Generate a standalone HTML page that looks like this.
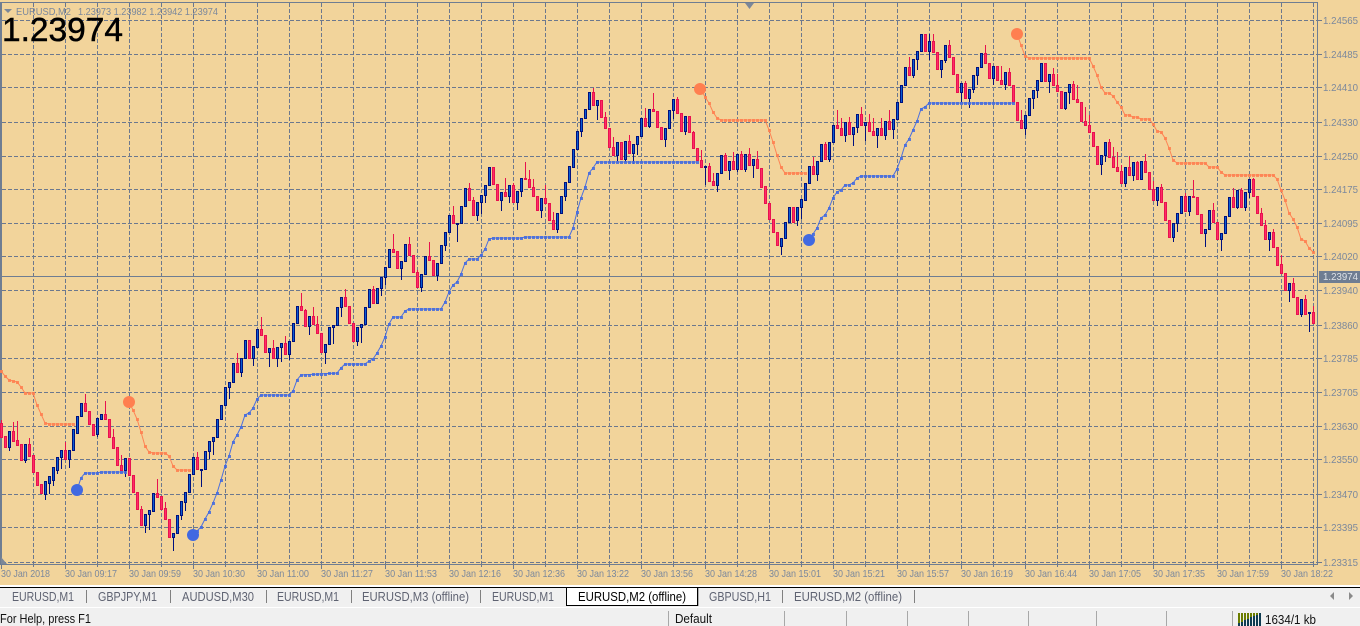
<!DOCTYPE html>
<html lang="en"><head><meta charset="utf-8"><title>EURUSD,M2</title>
<style>
html,body{margin:0;padding:0;width:1360px;height:626px;overflow:hidden;background:#f0f0f0}
svg{display:block;position:absolute;left:0;top:0}
text{font-family:"Liberation Sans",sans-serif;white-space:pre}
.t{font-size:10.5px;fill:#7b889c}
.tab{font-size:12.5px;fill:#5f6372}
.st{font-size:12.5px;fill:#111}
</style></head><body>
<svg xmlns="http://www.w3.org/2000/svg" width="1360" height="626" viewBox="0 0 1360 626">
<rect x="0" y="0" width="1360" height="585" fill="#f2d49b"/>
<g id="grid" shape-rendering="crispEdges" stroke="#6c788e" stroke-width="1" fill="none"></g>
<g shape-rendering="crispEdges">
<rect x="0" y="2" width="1318" height="1" fill="#6f7d92"/>
<rect x="0" y="2" width="2" height="563" fill="#6f7d92"/>
<rect x="1317" y="2" width="1" height="563" fill="#6f7d92"/>
<rect x="0" y="564" width="1318" height="1" fill="#6f7d92"/>
<rect x="0" y="276" width="1318" height="1" fill="#6f7d92"/>
</g>
<polygon points="745,3 754,3 749.5,9" fill="#7c8798"/>
<polygon points="4,9 12,9 8,13" fill="#7c8798"/>
<polygon points="1,557 7,564 1,564" fill="#7c8798"/>
<g id="candles" shape-rendering="crispEdges"></g>
<g id="ind"></g>
<text x="16" y="15" class="t" textLength="55" lengthAdjust="spacingAndGlyphs">EURUSD,M2</text>
<text x="78" y="15" class="t" textLength="140" lengthAdjust="spacingAndGlyphs">1.23973 1.23982 1.23942 1.23974</text>
<text x="2" y="41" font-size="33" fill="#000" stroke="#000" stroke-width=".5" textLength="121" lengthAdjust="spacingAndGlyphs">1.23974</text>

<g class="axis">
<text class="t" x="1323" y="24" textLength="35" lengthAdjust="spacingAndGlyphs">1.24565</text>
<text class="t" x="1323" y="58" textLength="35" lengthAdjust="spacingAndGlyphs">1.24485</text>
<text class="t" x="1323" y="91" textLength="35" lengthAdjust="spacingAndGlyphs">1.24410</text>
<text class="t" x="1323" y="126" textLength="35" lengthAdjust="spacingAndGlyphs">1.24330</text>
<text class="t" x="1323" y="160" textLength="35" lengthAdjust="spacingAndGlyphs">1.24250</text>
<text class="t" x="1323" y="193" textLength="35" lengthAdjust="spacingAndGlyphs">1.24175</text>
<text class="t" x="1323" y="227" textLength="35" lengthAdjust="spacingAndGlyphs">1.24095</text>
<text class="t" x="1323" y="260" textLength="35" lengthAdjust="spacingAndGlyphs">1.24020</text>
<text class="t" x="1323" y="294" textLength="35" lengthAdjust="spacingAndGlyphs">1.23940</text>
<text class="t" x="1323" y="329" textLength="35" lengthAdjust="spacingAndGlyphs">1.23860</text>
<text class="t" x="1323" y="362" textLength="35" lengthAdjust="spacingAndGlyphs">1.23785</text>
<text class="t" x="1323" y="396" textLength="35" lengthAdjust="spacingAndGlyphs">1.23705</text>
<text class="t" x="1323" y="430" textLength="35" lengthAdjust="spacingAndGlyphs">1.23630</text>
<text class="t" x="1323" y="463" textLength="35" lengthAdjust="spacingAndGlyphs">1.23550</text>
<text class="t" x="1323" y="498" textLength="35" lengthAdjust="spacingAndGlyphs">1.23470</text>
<text class="t" x="1323" y="531" textLength="35" lengthAdjust="spacingAndGlyphs">1.23395</text>
<text class="t" x="1323" y="566" textLength="35" lengthAdjust="spacingAndGlyphs">1.23315</text>
<rect x="1319" y="271" width="41" height="12" fill="#6f7d92"/>
<text x="1323" y="280" font-size="10.5" fill="#dfe3e8" textLength="35" lengthAdjust="spacingAndGlyphs">1.23974</text>
</g>

<g>
<text class="t" x="1" y="577" textLength="49" lengthAdjust="spacingAndGlyphs">30 Jan 2018</text>
<text class="t" x="65" y="577" textLength="52" lengthAdjust="spacingAndGlyphs">30 Jan 09:17</text>
<text class="t" x="129" y="577" textLength="52" lengthAdjust="spacingAndGlyphs">30 Jan 09:59</text>
<text class="t" x="193" y="577" textLength="52" lengthAdjust="spacingAndGlyphs">30 Jan 10:30</text>
<text class="t" x="257" y="577" textLength="52" lengthAdjust="spacingAndGlyphs">30 Jan 11:00</text>
<text class="t" x="321" y="577" textLength="52" lengthAdjust="spacingAndGlyphs">30 Jan 11:27</text>
<text class="t" x="385" y="577" textLength="52" lengthAdjust="spacingAndGlyphs">30 Jan 11:53</text>
<text class="t" x="449" y="577" textLength="52" lengthAdjust="spacingAndGlyphs">30 Jan 12:16</text>
<text class="t" x="513" y="577" textLength="52" lengthAdjust="spacingAndGlyphs">30 Jan 12:36</text>
<text class="t" x="577" y="577" textLength="52" lengthAdjust="spacingAndGlyphs">30 Jan 13:22</text>
<text class="t" x="641" y="577" textLength="52" lengthAdjust="spacingAndGlyphs">30 Jan 13:56</text>
<text class="t" x="705" y="577" textLength="52" lengthAdjust="spacingAndGlyphs">30 Jan 14:28</text>
<text class="t" x="769" y="577" textLength="52" lengthAdjust="spacingAndGlyphs">30 Jan 15:01</text>
<text class="t" x="833" y="577" textLength="52" lengthAdjust="spacingAndGlyphs">30 Jan 15:21</text>
<text class="t" x="897" y="577" textLength="52" lengthAdjust="spacingAndGlyphs">30 Jan 15:57</text>
<text class="t" x="961" y="577" textLength="52" lengthAdjust="spacingAndGlyphs">30 Jan 16:19</text>
<text class="t" x="1025" y="577" textLength="52" lengthAdjust="spacingAndGlyphs">30 Jan 16:44</text>
<text class="t" x="1089" y="577" textLength="52" lengthAdjust="spacingAndGlyphs">30 Jan 17:05</text>
<text class="t" x="1153" y="577" textLength="52" lengthAdjust="spacingAndGlyphs">30 Jan 17:35</text>
<text class="t" x="1217" y="577" textLength="52" lengthAdjust="spacingAndGlyphs">30 Jan 17:59</text>
<text class="t" x="1281" y="577" textLength="52" lengthAdjust="spacingAndGlyphs">30 Jan 18:22</text>
</g>

<g shape-rendering="crispEdges">
<rect x="0" y="585" width="1360" height="2" fill="#fff"/>
<rect x="0" y="587" width="1360" height="1" fill="#000"/>
<rect x="0" y="588" width="1360" height="19" fill="#f0f0f0"/>
<rect x="0" y="607" width="1360" height="1" fill="#fff"/>
<rect x="0" y="608" width="1360" height="18" fill="#f0f0f0"/>
<g fill="#808080">
<rect x="86" y="590" width="1" height="13"/><rect x="170" y="590" width="1" height="13"/>
<rect x="266" y="590" width="1" height="13"/><rect x="351" y="590" width="1" height="13"/>
<rect x="480" y="590" width="1" height="13"/><rect x="782" y="590" width="1" height="13"/>
<rect x="914" y="590" width="1" height="13"/>
</g>
<rect x="566" y="587" width="132" height="19" fill="#000"/>
<rect x="567" y="588" width="130" height="17" fill="#fff"/>
<rect x="698" y="588" width="1" height="18" fill="#b0b0b0"/>
<g fill="#a8a8a8">
<rect x="668" y="611" width="1" height="15"/><rect x="784" y="611" width="1" height="15"/>
<rect x="846" y="611" width="1" height="15"/><rect x="907" y="611" width="1" height="15"/>
<rect x="968" y="611" width="1" height="15"/><rect x="1028" y="611" width="1" height="15"/>
<rect x="1096" y="611" width="1" height="15"/><rect x="1166" y="611" width="1" height="15"/>
<rect x="1232" y="611" width="1" height="15"/>
</g>
</g>
<polygon points="1334,592 1334,600 1330,596" fill="#8a8a8a"/>
<polygon points="1349,592 1349,600 1353,596" fill="#8a8a8a"/>

<text class="tab" x="12" y="601" textLength="62" lengthAdjust="spacingAndGlyphs">EURUSD,M1</text>
<text class="tab" x="98" y="601" textLength="59" lengthAdjust="spacingAndGlyphs">GBPJPY,M1</text>
<text class="tab" x="182" y="601" textLength="72" lengthAdjust="spacingAndGlyphs">AUDUSD,M30</text>
<text class="tab" x="277" y="601" textLength="62" lengthAdjust="spacingAndGlyphs">EURUSD,M1</text>
<text class="tab" x="362" y="601" textLength="107" lengthAdjust="spacingAndGlyphs">EURUSD,M3 (offline)</text>
<text class="tab" x="492" y="601" textLength="62" lengthAdjust="spacingAndGlyphs">EURUSD,M1</text>
<text class="tab" style="fill:#000" x="578" y="601" textLength="108" lengthAdjust="spacingAndGlyphs">EURUSD,M2 (offline)</text>
<text class="tab" x="709" y="601" textLength="62" lengthAdjust="spacingAndGlyphs">GBPUSD,H1</text>
<text class="tab" x="794" y="601" textLength="108" lengthAdjust="spacingAndGlyphs">EURUSD,M2 (offline)</text>

<text class="st" x="0" y="623" textLength="91" lengthAdjust="spacingAndGlyphs">For Help, press F1</text>
<text class="st" x="675" y="623" textLength="37" lengthAdjust="spacingAndGlyphs">Default</text>
<text class="st" x="1265" y="624" textLength="51" lengthAdjust="spacingAndGlyphs">1634/1 kb</text>
<g id="meter" shape-rendering="crispEdges"></g>
</svg>
<script>
(function(){
var NS="http://www.w3.org/2000/svg";
function el(p,n,a){var e=document.createElementNS(NS,n);for(var k in a)e.setAttribute(k,a[k]);p.appendChild(e);return e;}
var g=document.getElementById("grid");
var ys=[20,54,87,122,156,189,223,256,290,325,358,392,426,459,494,527,562],i,x;
for(i=0;i<ys.length;i++)el(g,"line",{x1:2,x2:1317,y1:ys[i]+.5,y2:ys[i]+.5,"stroke-dasharray":"4 2"});
for(x=33;x<=1313;x+=32)el(g,"line",{x1:x+.5,x2:x+.5,y1:3,y2:564,"stroke-dasharray":"4 2"});
for(x=1;x<=1313;x+=32)el(g,"line",{x1:x+.5,x2:x+.5,y1:565,y2:((x-1)%64==0)?569:567,"stroke-dasharray":"none"});
for(i=0;i<ys.length;i++)el(g,"line",{x1:1318,x2:1322,y1:ys[i]+.5,y2:ys[i]+.5});

var D="1p423,437,420 5p436,447 9b431,447,,450 13p431,441,422 17p440,445,421 21p444,460 25b444,460,,462 29p444,456,438 33p455,472 37p472,485 41p484,493 45b481,494,,499 49b476,483,,493 53b467,480,,485 57b457,470,,473 61b450,457,,468 65p450,459,442 69b450,459,,467 73b429,450 77b416,433 81b403,416 85p403,411,394 89p411,424 93p424,435 97b418,434,,436 101b414,419 105p414,419,401 109p419,437 113p437,448,429 117p447,465 121p465,470,455 125b458,470,,476 129p458,475 133p475,492 137p492,509 141p509,525,506 145b514,525,,532 149b510,514,,529 153b493,511 157p493,497,479 161p496,509 165p508,519,502 169p519,537 173b533,537,,550 177b515,533 181b501,515,,519 185b492,502,,510 189b474,492 193b457,474 197p457,469,452 201b469,470,,486 205b451,469 209b441,451,,458 213b437,441,,454 217b419,437 221b405,419 225b387,405 229b382,387,,398 "+
"233b363,382 237p363,372,353 241b358,372,,376 245b340,358 249p340,358 253b346,358,,365 257b329,347 261p329,335,317 265p335,352 269b348,352,,366 273p348,358,340 277b347,358,,366 281b343,347,,361 285p343,354,336 289b341,354,,359 293b323,341 297b306,323 301p306,310,293 305p310,326,309 309b316,326,,334 313p316,324,307 317p324,333,316 321p333,352 325b344,352,,363 329b327,344 333b325,327,,343 337b307,325 341b297,307,,316 345p297,306,289 349p306,323 353p323,341 357b327,341,,345 361b324,327,,342 365b307,324 369b289,307 373p289,303,286 377b288,303 381b277,288,,295 385b267,277,,284 389b249,267 393p249,252,234 397p251,268 401b261,268,,279 405b244,261 409p244,255,237 413p255,272 417p272,287,270 421b274,287,,291 425b256,274 429p256,260,242 433p260,275 437b263,275,,280 441b245,263 445b232,245,,250 449b215,232 453p215,223,206 457b223,224,,241 461b206,223 465b188,206 469p188,200,183 473p200,215,197 477b202,215,,220 481b195,202,,213 485b185,195,,202 489b167,185 493p167,184 497p184,200 501b192,200,,210 505p192,196,178 509b185,196,,202 513p185,202,183 517b191,202,,209 521b178,191,,196 525p178,179,162 529p179,187,170 533p187,196,179 537p196,210 541b198,210,,217 545p198,203,185 549p203,220 553p220,229,212 557b213,229,,232 561b196,213 565b182,196,,200 569b166,182 "+
"573b149,167 577b131,149 581b118,131,,136 585b109,118 589b92,109 593p92,105,88 597b100,105,,119 601p100,117 605p117,128,112 609p128,147 613p147,155,137 617b142,155,,160 621p142,159 625b141,159,,161 629p141,153,135 633b144,153,,163 637b136,144,,154 641b118,136 645p118,126,108 649b109,126,,127 653p109,111,93 657p111,127 661p127,139 665b128,139,,146 669b110,128 673b99,110,,118 677p99,113,97 681p113,131 685b116,131,,134 689p116,132 693p132,148,131 697p148,160 701p160,167,150 705b166,167,,184 709p166,181,163 713p181,185,173 717b173,185,,191 721b155,173 725p155,170,153 729b161,170,,179 733p161,169,152 737b154,169,,171 741p154,169,151 745b154,169,,171 749p154,165,148 753b159,165,,177 757p159,168,151 761p168,187 765p186,203 769p203,219 773p219,232 777p232,245 781b238,246,,254 785b222,238 789b207,222 793p207,222 "+
"797b207,220,,225 801b199,207,,218 805b183,200 809b166,183 813p166,174,157 817b161,174,,180 821b144,161 825p144,159,142 829b142,159,,161 833b125,142 837p125,128,110 841p128,135,118 845b122,135,,141 849p122,134,117 853b127,134,,145 857b114,127,,132 861p114,125,107 865b122,125,,140 869p122,131,114 873p131,135,118 877b128,135,,147 881p128,135,118 885b121,135,,139 889p121,129,110 893b119,129,,138 897b102,119 901b85,102 905b67,85 909p67,75,57 913b59,75,,77 917b51,59,,69 921b34,51 925p34,51 929b41,51,34,59 933p41,52,34 937p52,69 941b60,69,,77 945b45,60,,62 949p45,57,40 953p57,74 957p74,92 961b83,92,,101 965p83,98,81 969b89,98,,107 973b75,89,,92 977b67,75,,84 981b53,67 985p53,63,45 989p63,78 993b66,78,,84 997p66,80 1001p80,84,66 1005b72,84,,89 1009p72,85,68 1013p85,102 1017p102,120 1021p120,128,110 1025b115,128,,134 1029b98,115 1033b90,98,,108 1037b80,90,,97 "+
"1041b63,81 1045p63,81 1049b74,81,,92 1053p74,85,68 1057p85,91,74 1061p91,108 1065b92,108,,109 1069b84,92,,103 1073p84,99,81 1077p99,102,85 1081p102,121 1085p121,125,107 1089p125,132,115 1093p132,146 1097p146,164 1101b155,164,,174 1105b142,155,,161 1109p142,157,139 1113p157,167,147 1117p167,171,152 1121p171,183,165 1125b167,183,,186 1129p167,175,156 1133b162,175,,180 1137p162,179,161 1141b161,179 1145p161,172,154 1149p172,189 1153p189,200,181 1157b187,200,,205 1161p187,202,184 1165p202,220 1169p220,237 1173b223,237,,241 1177b213,223,,231 1181b196,213 1185p196,211,193 1189b196,211,,215 1193p196,197,180 1197p197,214 1201p214,233 1205b229,233,,246 1209b210,229 1213p210,222,203 1217p222,239 1221b233,239,,250 1225b216,233 1229b197,216 1233p197,207,188 1237b190,207,,208 1241p190,207,188 1245b192,207,,210 1249b179,192,,197 1253p179,196,178 1257p196,213 1261p213,225,208 1265p225,239,220 1269b232,239,,250 1273p232,247,229 1277p247,265 1281p264,273,255 1285p273,290 1289b283,290,,301 1293p283,297,278 1297p297,314 1301b299,314,,316 1305p299,314,295 1309b312,313,,331 1313p312,323,306";
var c=document.getElementById("candles");
D.split(" ").forEach(function(s){
 var m=s.match(/^(\d+)([bp])(\d+),(\d+)(?:,(\d*))?(?:,(\d*))?$/);if(!m)return;
 var X=+m[1],b=m[2]=="b",t=+m[3],e=+m[4],wt=m[5]?+m[5]:t,wb=m[6]?+m[6]:e;
 var edge=b?"#00107e":"#e8124f",fill=b?"#0a5ed2":"#ff2c66";
 el(c,"rect",{x:X,y:wt,width:1,height:wb-wt+1,fill:edge});
 el(c,"rect",{x:X-1,y:t,width:3,height:e-t+1,fill:edge});
 if(e-t>1)el(c,"rect",{x:X,y:t+1,width:1,height:e-t-1,fill:fill});
});

var O="#ff7f50",B="#4169e1";
var S=[
[O,[[1,371],[5,376],[9,380],[13,381],[17,382],[21,387],[25,393],[33,393],[37,405],[41,414],[45,423],[49,424],[73,424]]],
[O,[[129,402],[133,410],[137,419],[141,432],[145,446],[149,452],[153,453],[165,453],[169,456],[173,466],[177,470],[189,470]]],
[O,[[701,89],[705,97],[709,103],[713,112],[717,118],[721,120],[765,120],[769,130],[773,142],[777,155],[781,167],[785,173],[805,173]]],
[O,[[1017,34],[1021,45],[1025,56],[1029,58],[1089,58],[1093,66],[1097,75],[1101,87],[1105,93],[1109,93],[1113,96],[1117,102],[1121,107],[1125,115],[1129,115],[1133,117],[1137,117],[1141,119],[1149,119],[1153,124],[1157,131],[1161,132],[1165,138],[1169,148],[1173,160],[1177,163],[1205,163],[1209,167],[1217,167],[1221,172],[1225,175],[1273,175],[1277,179],[1281,190],[1285,200],[1289,213],[1293,219],[1297,227],[1301,239],[1305,241],[1309,248],[1313,252]]],
[B,[[77,490],[81,478],[85,473],[97,473],[101,472],[125,472]]],
[B,[[193,535],[201,527],[205,519],[209,512],[213,503],[217,493],[221,480],[225,466],[229,456],[233,442],[237,435],[241,427],[245,415],[249,413],[253,408],[257,399],[261,395],[289,395],[293,391],[297,380],[301,375],[337,373],[341,368],[345,364],[365,364],[369,361],[373,359],[377,353],[381,346],[385,337],[389,324],[393,317],[401,317],[405,311],[409,309],[441,309],[445,302],[449,292],[453,285],[457,282],[461,274],[465,263],[469,259],[477,259],[481,255],[485,249],[489,239],[493,238],[521,238],[525,237],[569,237],[573,228],[577,212],[581,198],[585,187],[589,173],[593,168],[597,162],[697,162]]],
[B,[[809,240],[817,228],[821,218],[825,215],[829,208],[833,198],[837,192],[841,190],[845,185],[849,185],[853,183],[857,178],[861,176],[893,176],[897,169],[901,158],[905,145],[909,139],[913,130],[917,121],[921,109],[925,107],[929,103],[1013,103]]]
];
var ind=document.getElementById("ind");
S.forEach(function(s){
 var col=s[0],p=s[1],k;
 el(ind,"polyline",{points:p.map(function(q){return q.join(",")}).join(" "),fill:"none",stroke:col,"stroke-width":1,opacity:.95});
 for(k=0;k<p.length-1;k++){
  for(var xx=p[k][0];xx<p[k+1][0]||(k==p.length-2&&xx==p[k+1][0]);xx+=4){
   var yy=p[k][1]+(p[k+1][1]-p[k][1])*(xx-p[k][0])/(p[k+1][0]-p[k][0]);
   el(ind,"rect",{x:xx-1,y:Math.round(yy)-1,width:3,height:3,fill:col,"shape-rendering":"crispEdges",opacity:.85});
  }
 }
});
[[129,402,O],[700,89,O],[1017,34,O],[77,490,B],[193,535,B],[809,240,B]].forEach(function(d){
 el(ind,"circle",{cx:d[0],cy:d[1],r:6,fill:d[2]});
});

var mt=document.getElementById("meter");
for(i=0;i<8;i++){
 var h=3+Math.round(i*1.4);
 el(mt,"rect",{x:1238+i*3,y:613,width:2,height:13-h,fill:"#6b7d00"});
 el(mt,"rect",{x:1238+i*3,y:626-h,width:2,height:h,fill:"#103c52"});
}
})();
</script>
</body></html>
